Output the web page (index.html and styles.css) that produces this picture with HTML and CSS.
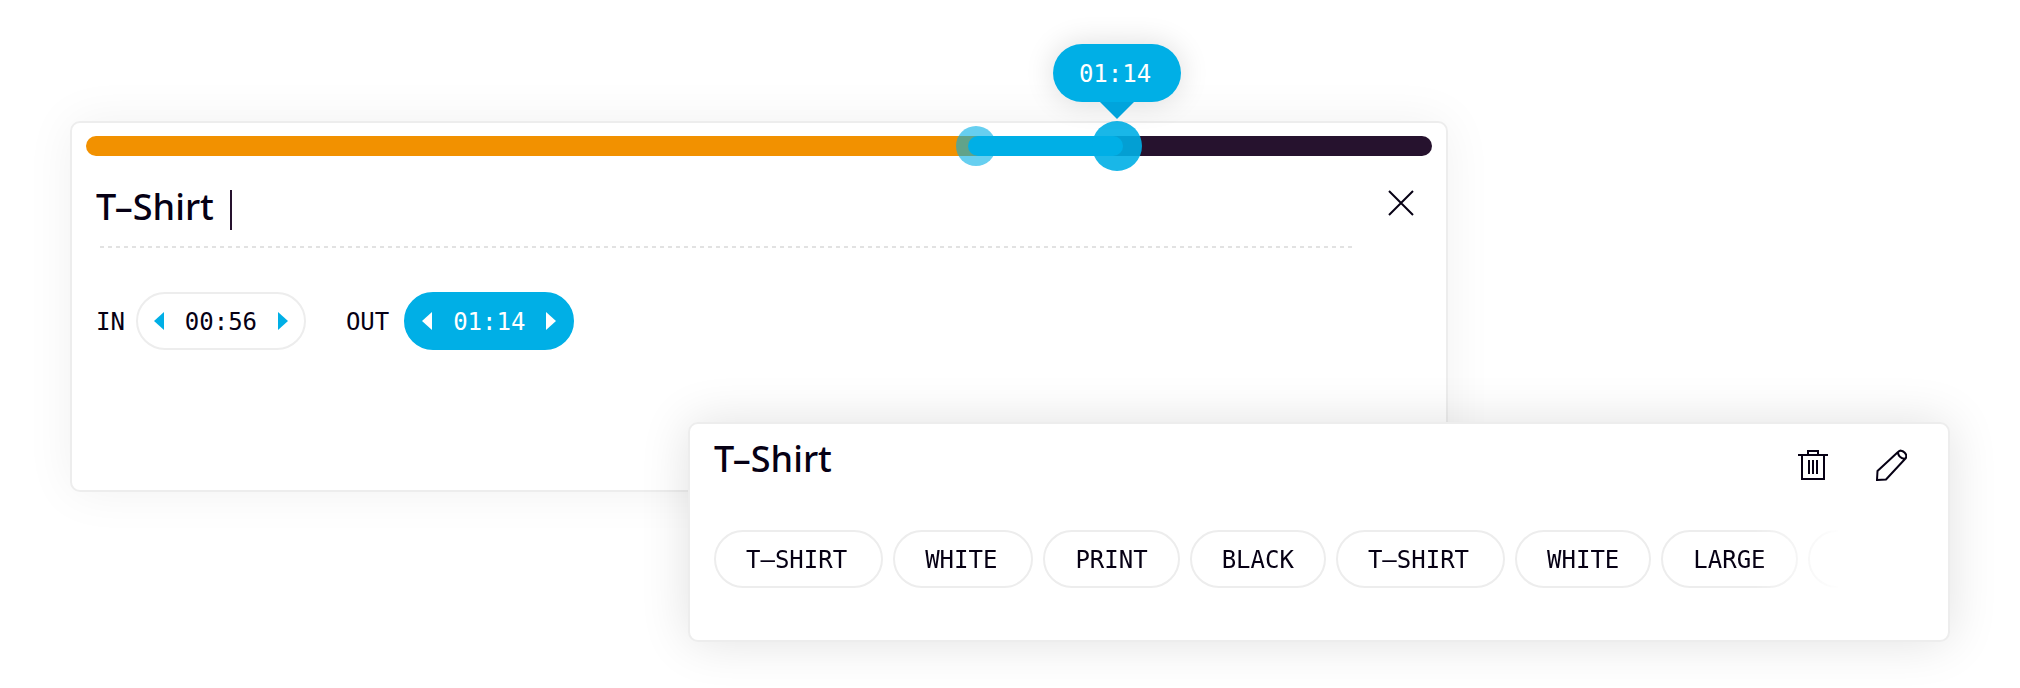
FILE: index.html
```html
<!DOCTYPE html>
<html lang="en">
<head>
  <meta charset="UTF-8">
  <meta name="viewport" content="width=device-width, initial-scale=1.0">
  <title>Tag Editor</title>
  <link rel="stylesheet" href="styles.css">
</head>
<body>
  <main class="stage">
    <section class="card editor">
      <div class="timeline">
        <div class="segment segment-played"></div>
        <div class="segment segment-range">
          <span class="handle handle-in"></span>
          <span class="range-fill"></span>
          <span class="handle handle-out"></span>
          <output class="tooltip">01:14</output>
        </div>
        <div class="segment segment-rest"></div>
      </div>

      <div class="editor-head">
        <label class="title-field" for="tagTitle">
          <input class="title title-input" id="tagTitle" type="text" value="T–Shirt" aria-label="Title">
          <span class="caret"></span>
        </label>
        <button class="icon-btn close-btn" type="button" aria-label="Close">
          <svg width="26" height="26" viewBox="0 0 26 26">
            <path d="M1 1l24 24M25 1l-24 24"/>
          </svg>
        </button>
      </div>

      <div class="times">
        <span class="time-label">IN</span>
        <div class="stepper">
          <button class="step" type="button" aria-label="In earlier">
            <svg width="10" height="18" viewBox="0 0 10 18"><path d="M10 0v18L0 9z"/></svg>
          </button>
          <span class="time">00:56</span>
          <button class="step" type="button" aria-label="In later">
            <svg width="10" height="18" viewBox="0 0 10 18"><path d="M0 0v18l10-9z"/></svg>
          </button>
        </div>
        <span class="time-label time-label-out">OUT</span>
        <div class="stepper stepper-active">
          <button class="step" type="button" aria-label="Out earlier">
            <svg width="10" height="18" viewBox="0 0 10 18"><path d="M10 0v18L0 9z"/></svg>
          </button>
          <span class="time">01:14</span>
          <button class="step" type="button" aria-label="Out later">
            <svg width="10" height="18" viewBox="0 0 10 18"><path d="M0 0v18l10-9z"/></svg>
          </button>
        </div>
      </div>
    </section>

    <section class="card summary">
      <div class="summary-head">
        <h2 class="title">T–Shirt</h2>
        <div class="actions">
          <button class="icon-btn" type="button" aria-label="Delete">
            <svg width="32" height="32" viewBox="0 0 32 32">
              <path d="M1 6h30M11 6V2h10v4M5 6v24h22V6M12 11v14M16 11v14M20 11v14"/>
            </svg>
          </button>
          <button class="icon-btn" type="button" aria-label="Edit">
            <svg width="32" height="32" viewBox="0 0 32 32">
              <path d="M2 31l.5-9L23 3q3-3 6.500.500t.500 6.500L11 30.500zM23 3q0 6 7 7"/>
            </svg>
          </button>
        </div>
      </div>
      <ul class="tags">
        <li class="tag tag-wide">T–SHIRT</li>
        <li class="tag tag-wide">WHITE</li>
        <li class="tag">PRINT</li>
        <li class="tag">BLACK</li>
        <li class="tag tag-wide">T–SHIRT</li>
        <li class="tag">WHITE</li>
        <li class="tag">LARGE</li>
        <li class="tag tag-empty"></li>
      </ul>
    </section>
  </main>
</body>
</html>
```
FILE: styles.css
```css
:root {
  --blue: #00afe6;
  --orange: #f29100;
  --plum: #26122e;
  --ink: #060014;
  --line: #ededed;
}

* {
  margin: 0;
  padding: 0;
  box-sizing: border-box;
}

body {
  font-family: "DejaVu Sans Mono", monospace;
  font-size: 24px;
  line-height: 30px;
  color: var(--ink);
  background: #fff;
}

button {
  border: none;
  background: none;
  cursor: pointer;
}

svg {
  display: block;
}

/* the two cards share a grid and overlap in the middle */
.stage {
  display: grid;
  grid-template-columns: 618fr 760fr 502fr;
  grid-template-rows: 301px 70px auto;
  padding: 121px 70px 47px 70px;
}

.card {
  background: #fff;
  border: 2px solid var(--line);
  border-radius: 10px;
}

.editor {
  grid-column: 1 / 3;
  grid-row: 1 / 3;
  padding: 13px 14px;
  box-shadow: 0 0 50px rgba(0, 0, 0, 0.06);
}

.summary {
  grid-column: 2 / 4;
  grid-row: 2 / 4;
  padding: 14px 24px 52px;
  box-shadow: 0 0 50px rgba(0, 0, 0, 0.12);
}

.timeline {
  display: flex;
  height: 20px;
}

.segment-played {
  flex: 890;
  background: var(--orange);
  border-radius: 10px 0 0 10px;
}

.segment-range {
  position: relative;
  flex: 141;
  background: linear-gradient(90deg, var(--orange) 10%, var(--plum) 10%);
}

.segment-rest {
  flex: 315;
  background: var(--plum);
  border-radius: 0 10px 10px 0;
}

.range-fill {
  position: absolute;
  inset: 0 -6px 0 -8px;
  background: var(--blue);
  border-radius: 10px;
}

.handle {
  position: absolute;
  top: 50%;
  border-radius: 50%;
  background: var(--blue);
  transform: translate(-50%, -50%);
}

.handle-in {
  left: 0;
  width: 40px;
  height: 40px;
  opacity: 0.6;
}

.handle-out {
  left: 100%;
  width: 50px;
  height: 50px;
  opacity: 0.9;
}

.tooltip {
  position: absolute;
  left: 100%;
  bottom: 54px;
  width: 128px;
  padding: 15px 4px 13px 0;
  border-radius: 29px;
  background: var(--blue);
  color: #fff;
  text-align: center;
  transform: translateX(-50%);
  box-shadow: 0 0 30px rgba(0, 0, 0, 0.14);
}

.tooltip::after {
  content: "";
  position: absolute;
  top: 100%;
  left: 50%;
  border: 17px solid transparent;
  border-top-color: #00a4dc;
  border-bottom: none;
  transform: translateX(-50%);
}

.title {
  font-family: "Noto Sans", sans-serif;
  font-size: 36px;
  font-weight: 500;
  line-height: 42px;
  color: var(--ink);
}

.editor-head {
  display: flex;
  align-items: flex-start;
  gap: 35px;
  padding: 32px 18px 0 10px;
}

.title-field {
  display: flex;
  flex: 1;
  align-items: center;
  height: 60px;
  padding-bottom: 16px;
  background: repeating-linear-gradient(90deg, #e2e2e2 0 4px, transparent 4px 8px) 4px 100% / 100% 2px no-repeat;
}

.title-input {
  width: 134px;
  padding-bottom: 6px;
  border: none;
  outline: none;
  background: none;
}

.caret {
  width: 2px;
  height: 40px;
  background: var(--plum);
}

.icon-btn path {
  fill: none;
  stroke: var(--ink);
  stroke-width: 2;
}

.close-btn {
  padding-top: 2px;
}

.times {
  display: flex;
  align-items: center;
  padding: 44px 10px 0;
}

.time,
.time-label {
  padding-top: 2px;
}

.time-label {
  margin-right: 11px;
}

.time-label-out {
  margin-right: 15px;
  margin-left: 40px;
}

.stepper {
  display: flex;
  align-items: center;
  justify-content: space-between;
  width: 170px;
  height: 58px;
  padding: 0 16px;
  border: 2px solid var(--line);
  border-radius: 29px;
}

.step path {
  fill: var(--blue);
}

.stepper-active {
  border-color: var(--blue);
  background: var(--blue);
  color: #fff;
}

.stepper-active .step path {
  fill: #fff;
}

.summary-head {
  display: flex;
  justify-content: space-between;
  margin-bottom: 49px;
}

.actions {
  display: flex;
  gap: 46px;
  padding: 11px 17px 0 0;
}

.tags {
  display: flex;
  gap: 10px;
  width: 1124px;
  max-width: 100%;
  overflow: hidden;
  list-style: none;
  mask-image: linear-gradient(90deg, #000 1040px, transparent 1130px);
}

.tag {
  flex: none;
  padding: 13px 30px 11px;
  border: 2px solid var(--line);
  border-radius: 29px;
}

.tag-wide {
  padding-right: 34px;
}

.tag-empty {
  width: 136px;
}
```
